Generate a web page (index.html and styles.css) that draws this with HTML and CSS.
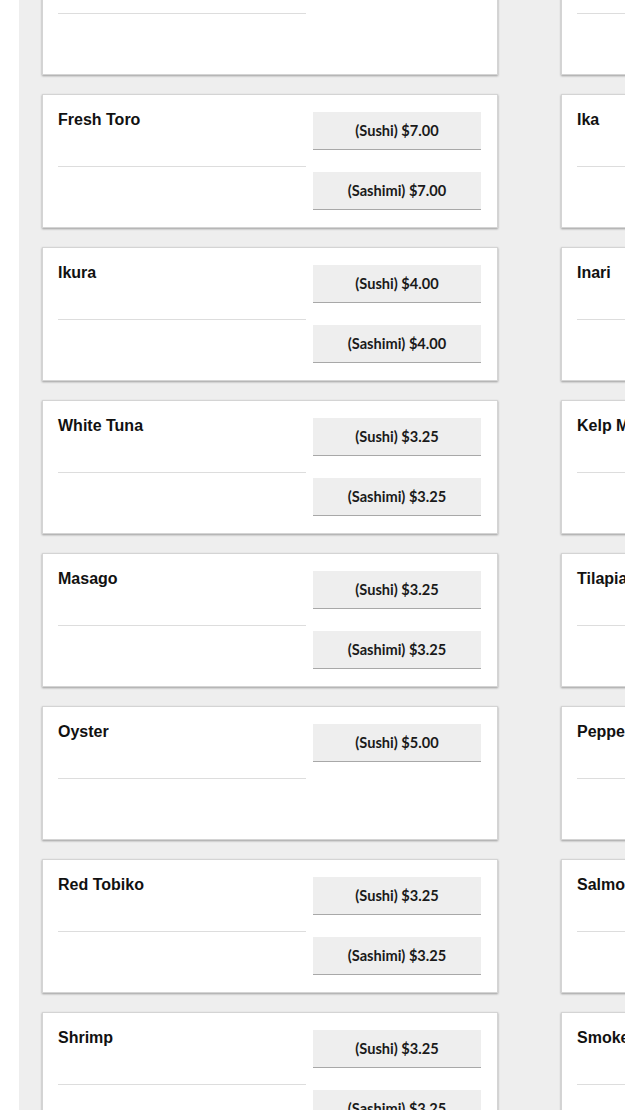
FILE: index.html
```html
<!DOCTYPE html>
<html>
<head>
<meta charset="utf-8">
<link rel="stylesheet" href="styles.css">
</head>
<body>
<div class="page">
  <div class="grid">
    <div class="card"><div class="info"><div class="name">Albacore</div><div class="desc"></div></div><div class="prices"><div class="btn">(Sushi) $3.25</div></div></div>
    <div class="card"><div class="info"><div class="name">Hamachi</div><div class="desc"></div></div><div class="prices"><div class="btn">(Sushi) $3.75</div></div></div>

    <div class="card"><div class="info"><div class="name">Fresh Toro</div><div class="desc"></div></div><div class="prices"><div class="btn">(Sushi) $7.00</div><div class="btn">(Sashimi) $7.00</div></div></div>
    <div class="card"><div class="info"><div class="name">Ika</div><div class="desc"></div></div><div class="prices"><div class="btn">(Sushi) $3.25</div><div class="btn">(Sashimi) $3.25</div></div></div>

    <div class="card"><div class="info"><div class="name">Ikura</div><div class="desc"></div></div><div class="prices"><div class="btn">(Sushi) $4.00</div><div class="btn">(Sashimi) $4.00</div></div></div>
    <div class="card"><div class="info"><div class="name">Inari</div><div class="desc"></div></div><div class="prices"><div class="btn">(Sushi) $2.75</div></div></div>

    <div class="card"><div class="info"><div class="name">White Tuna</div><div class="desc"></div></div><div class="prices"><div class="btn">(Sushi) $3.25</div><div class="btn">(Sashimi) $3.25</div></div></div>
    <div class="card"><div class="info"><div class="name">Kelp Mushroom</div><div class="desc"></div></div><div class="prices"><div class="btn">(Sushi) $3.00</div></div></div>

    <div class="card"><div class="info"><div class="name">Masago</div><div class="desc"></div></div><div class="prices"><div class="btn">(Sushi) $3.25</div><div class="btn">(Sashimi) $3.25</div></div></div>
    <div class="card"><div class="info"><div class="name">Tilapia</div><div class="desc"></div></div><div class="prices"><div class="btn">(Sushi) $3.00</div></div></div>

    <div class="card"><div class="info"><div class="name">Oyster</div><div class="desc"></div></div><div class="prices"><div class="btn">(Sushi) $5.00</div></div></div>
    <div class="card"><div class="info"><div class="name">Pepper Tuna</div><div class="desc"></div></div><div class="prices"><div class="btn">(Sushi) $3.75</div></div></div>

    <div class="card"><div class="info"><div class="name">Red Tobiko</div><div class="desc"></div></div><div class="prices"><div class="btn">(Sushi) $3.25</div><div class="btn">(Sashimi) $3.25</div></div></div>
    <div class="card"><div class="info"><div class="name">Salmon</div><div class="desc"></div></div><div class="prices"><div class="btn">(Sushi) $3.50</div></div></div>

    <div class="card"><div class="info"><div class="name">Shrimp</div><div class="desc"></div></div><div class="prices"><div class="btn">(Sushi) $3.25</div><div class="btn">(Sashimi) $3.25</div></div></div>
    <div class="card"><div class="info"><div class="name">Smoked Salmon</div><div class="desc"></div></div><div class="prices"><div class="btn">(Sushi) $3.75</div></div></div>
  </div>
</div>
</body>
</html>
```
FILE: styles.css
```css
html, body {
  margin: 0;
  padding: 0;
  background: #ffffff;
  overflow: hidden;
  height: 1110px;
}
.page {
  margin-left: 19px;
  background: #eeeeee;
  padding: 0 23px;
  height: 1110px;
  overflow: hidden;
}
.grid {
  display: grid;
  grid-template-columns: 456px 456px;
  column-gap: 63px;
  row-gap: 19px;
  margin-top: -59px;
  width: 975px;
}
.card {
  box-sizing: border-box;
  height: 134px;
  background: #fff;
  border: 1px solid #d4d4d4;
  box-shadow: 0 1px 2px rgba(0,0,0,0.35);
  padding: 16px 16px 16px 15px;
  display: flex;
  gap: 7px;
}
.info {
  width: 248px;
  flex: none;
}
.name {
  box-sizing: border-box;
  font-family: "Liberation Sans", Arial, sans-serif;
  font-weight: bold;
  font-size: 16px;
  color: #111;
  height: 56px;
  padding-top: 1px;
  line-height: 16px;
  border-bottom: 1px solid #dddddd;
}
.prices {
  flex: 1;
  display: flex;
  flex-direction: column;
  gap: 22px;
  padding-top: 1px;
}
.btn {
  box-sizing: border-box;
  height: 38px;
  background: #eeeeee;
  border-bottom: 1px solid #a8a8a8;
  display: flex;
  align-items: center;
  justify-content: center;
  font-family: "Lato", "Noto Sans", sans-serif;
  font-weight: 700;
  font-size: 14.6px;
  color: #1a1a1a;
}
```
